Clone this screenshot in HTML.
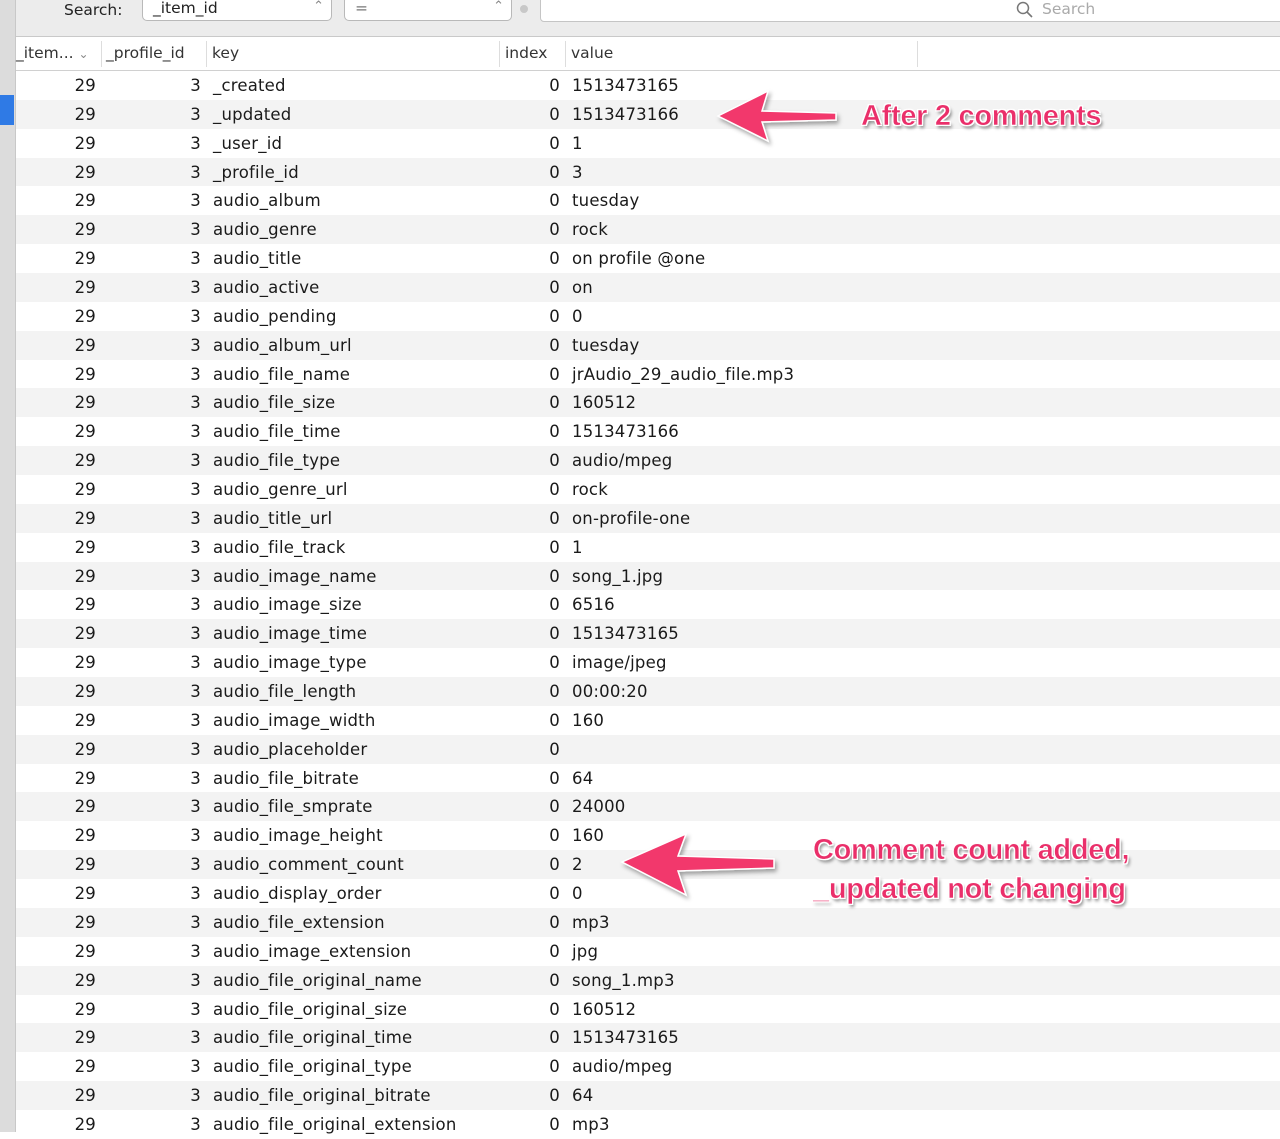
<!DOCTYPE html>
<html><head><meta charset="utf-8"><style>
*{margin:0;padding:0;box-sizing:border-box}
body{width:1280px;height:1132px;overflow:hidden;background:#fff;font-family:"DejaVu Sans",sans-serif;position:relative;color:#1a1a1a}
#side{position:absolute;left:0;top:0;width:16px;height:1132px;background:#dcdcdc;border-right:1px solid #c8c8c8}
#sel{position:absolute;left:0;top:95px;width:14px;height:30px;background:#2f7ae5}
#bar{position:absolute;left:16px;top:0;width:1264px;height:37px;background:#ececec;border-bottom:1px solid #c9c9c9}
.t{position:absolute;font-size:15.5px}
.pop{position:absolute;top:-4px;height:25px;background:#fff;border:1px solid #b9b9b9;border-radius:5px;font-size:15.5px;padding:2px 10px;color:#222}
#hdr{position:absolute;left:16px;top:37px;width:1264px;height:34px;background:#fff;border-bottom:1px solid #d0d0d0;color:#333}
.hs{position:absolute;top:4px;width:1px;height:26px;background:#ddd}
#rows{position:absolute;left:16px;top:71px;width:1264px}
.r{height:28.87px;position:relative;font-size:16.5px;line-height:29px;letter-spacing:0.2px}
.r:nth-child(even){background:#f3f3f3}
.r span{position:absolute;top:0}
.a{right:1184px}.b{right:1079px}.c{left:197px}.d{right:720px}.e{left:556px}
.note{position:absolute;font-family:"Liberation Sans",sans-serif;font-weight:bold;color:#ea2f6a;font-size:29px;-webkit-text-stroke:0.5px #fff;text-shadow:1px 1px 0 #fff,-1px -1px 0 #fff,1px -1px 0 #fff,-1px 1px 0 #fff,2px 3px 3px rgba(0,0,0,.45);letter-spacing:-0.3px;line-height:39px}
svg{position:absolute;left:0;top:0}
</style></head><body>
<div id="side"></div><div id="sel"></div>
<div id="bar">
<div class="t" style="left:48px;top:1px;color:#222">Search:</div>
<div class="pop" style="left:126px;width:190px">_item_id<span style="position:absolute;right:7px;color:#888;font-size:13px">⌃</span></div>
<div class="pop" style="left:328px;width:168px;color:#777">=<span style="position:absolute;right:7px;color:#888;font-size:13px">⌃</span></div>
<div style="position:absolute;left:504px;top:5px;width:8px;height:8px;border-radius:4px;background:#c8c8c8"></div>
<div style="position:absolute;left:524px;top:-4px;width:760px;height:26px;background:#fff;border:1px solid #c5c5c5;border-radius:4px"></div>
<svg style="left:999px;top:1px" width="20" height="18"><circle cx="8" cy="7" r="5.5" fill="none" stroke="#777" stroke-width="1.5"/><line x1="12" y1="11" x2="17" y2="16" stroke="#777" stroke-width="1.6"/></svg>
<div class="t" style="left:1026px;top:0;color:#aaa">Search</div>
</div>
<div id="hdr">
<div class="t" style="left:0;top:7px">_item... <span style="color:#888;font-size:12px">⌄</span></div>
<div class="hs" style="left:85px"></div>
<div class="t" style="left:90px;top:7px">_profile_id</div>
<div class="hs" style="left:190px"></div>
<div class="t" style="left:196px;top:7px">key</div>
<div class="hs" style="left:483px"></div>
<div class="t" style="left:489px;top:7px">index</div>
<div class="hs" style="left:549px"></div>
<div class="t" style="left:555px;top:7px">value</div>
<div class="hs" style="left:901px"></div>
</div>
<div id="rows">
<div class="r"><span class="a">29</span><span class="b">3</span><span class="c">_created</span><span class="d">0</span><span class="e">1513473165</span></div>
<div class="r"><span class="a">29</span><span class="b">3</span><span class="c">_updated</span><span class="d">0</span><span class="e">1513473166</span></div>
<div class="r"><span class="a">29</span><span class="b">3</span><span class="c">_user_id</span><span class="d">0</span><span class="e">1</span></div>
<div class="r"><span class="a">29</span><span class="b">3</span><span class="c">_profile_id</span><span class="d">0</span><span class="e">3</span></div>
<div class="r"><span class="a">29</span><span class="b">3</span><span class="c">audio_album</span><span class="d">0</span><span class="e">tuesday</span></div>
<div class="r"><span class="a">29</span><span class="b">3</span><span class="c">audio_genre</span><span class="d">0</span><span class="e">rock</span></div>
<div class="r"><span class="a">29</span><span class="b">3</span><span class="c">audio_title</span><span class="d">0</span><span class="e">on profile @one</span></div>
<div class="r"><span class="a">29</span><span class="b">3</span><span class="c">audio_active</span><span class="d">0</span><span class="e">on</span></div>
<div class="r"><span class="a">29</span><span class="b">3</span><span class="c">audio_pending</span><span class="d">0</span><span class="e">0</span></div>
<div class="r"><span class="a">29</span><span class="b">3</span><span class="c">audio_album_url</span><span class="d">0</span><span class="e">tuesday</span></div>
<div class="r"><span class="a">29</span><span class="b">3</span><span class="c">audio_file_name</span><span class="d">0</span><span class="e">jrAudio_29_audio_file.mp3</span></div>
<div class="r"><span class="a">29</span><span class="b">3</span><span class="c">audio_file_size</span><span class="d">0</span><span class="e">160512</span></div>
<div class="r"><span class="a">29</span><span class="b">3</span><span class="c">audio_file_time</span><span class="d">0</span><span class="e">1513473166</span></div>
<div class="r"><span class="a">29</span><span class="b">3</span><span class="c">audio_file_type</span><span class="d">0</span><span class="e">audio/mpeg</span></div>
<div class="r"><span class="a">29</span><span class="b">3</span><span class="c">audio_genre_url</span><span class="d">0</span><span class="e">rock</span></div>
<div class="r"><span class="a">29</span><span class="b">3</span><span class="c">audio_title_url</span><span class="d">0</span><span class="e">on-profile-one</span></div>
<div class="r"><span class="a">29</span><span class="b">3</span><span class="c">audio_file_track</span><span class="d">0</span><span class="e">1</span></div>
<div class="r"><span class="a">29</span><span class="b">3</span><span class="c">audio_image_name</span><span class="d">0</span><span class="e">song_1.jpg</span></div>
<div class="r"><span class="a">29</span><span class="b">3</span><span class="c">audio_image_size</span><span class="d">0</span><span class="e">6516</span></div>
<div class="r"><span class="a">29</span><span class="b">3</span><span class="c">audio_image_time</span><span class="d">0</span><span class="e">1513473165</span></div>
<div class="r"><span class="a">29</span><span class="b">3</span><span class="c">audio_image_type</span><span class="d">0</span><span class="e">image/jpeg</span></div>
<div class="r"><span class="a">29</span><span class="b">3</span><span class="c">audio_file_length</span><span class="d">0</span><span class="e">00:00:20</span></div>
<div class="r"><span class="a">29</span><span class="b">3</span><span class="c">audio_image_width</span><span class="d">0</span><span class="e">160</span></div>
<div class="r"><span class="a">29</span><span class="b">3</span><span class="c">audio_placeholder</span><span class="d">0</span><span class="e"></span></div>
<div class="r"><span class="a">29</span><span class="b">3</span><span class="c">audio_file_bitrate</span><span class="d">0</span><span class="e">64</span></div>
<div class="r"><span class="a">29</span><span class="b">3</span><span class="c">audio_file_smprate</span><span class="d">0</span><span class="e">24000</span></div>
<div class="r"><span class="a">29</span><span class="b">3</span><span class="c">audio_image_height</span><span class="d">0</span><span class="e">160</span></div>
<div class="r"><span class="a">29</span><span class="b">3</span><span class="c">audio_comment_count</span><span class="d">0</span><span class="e">2</span></div>
<div class="r"><span class="a">29</span><span class="b">3</span><span class="c">audio_display_order</span><span class="d">0</span><span class="e">0</span></div>
<div class="r"><span class="a">29</span><span class="b">3</span><span class="c">audio_file_extension</span><span class="d">0</span><span class="e">mp3</span></div>
<div class="r"><span class="a">29</span><span class="b">3</span><span class="c">audio_image_extension</span><span class="d">0</span><span class="e">jpg</span></div>
<div class="r"><span class="a">29</span><span class="b">3</span><span class="c">audio_file_original_name</span><span class="d">0</span><span class="e">song_1.mp3</span></div>
<div class="r"><span class="a">29</span><span class="b">3</span><span class="c">audio_file_original_size</span><span class="d">0</span><span class="e">160512</span></div>
<div class="r"><span class="a">29</span><span class="b">3</span><span class="c">audio_file_original_time</span><span class="d">0</span><span class="e">1513473165</span></div>
<div class="r"><span class="a">29</span><span class="b">3</span><span class="c">audio_file_original_type</span><span class="d">0</span><span class="e">audio/mpeg</span></div>
<div class="r"><span class="a">29</span><span class="b">3</span><span class="c">audio_file_original_bitrate</span><span class="d">0</span><span class="e">64</span></div>
<div class="r"><span class="a">29</span><span class="b">3</span><span class="c">audio_file_original_extension</span><span class="d">0</span><span class="e">mp3</span></div>
</div>
<svg width="1280" height="1132">
<defs><filter id="sh" x="-20%" y="-20%" width="140%" height="140%"><feDropShadow dx="2" dy="3" stdDeviation="2" flood-color="#000" flood-opacity="0.35"/></filter></defs>
<path d="M718 116 L768 91 L762 111 L836 113 L836 120 L762 122 L768 141 Z" fill="#f2386c" stroke="#fff" stroke-width="1.5" filter="url(#sh)"/>
<path d="M622 862 L686 834 L678 856 L774 859 L774 868 L678 871 L686 895 Z" fill="#f2386c" stroke="#fff" stroke-width="1.5" filter="url(#sh)"/>
</svg>
<div class="note" style="left:861px;top:97px">After 2 comments</div>
<div class="note" style="left:813px;top:831px">Comment count added,<br>_updated not changing</div>
</body></html>
